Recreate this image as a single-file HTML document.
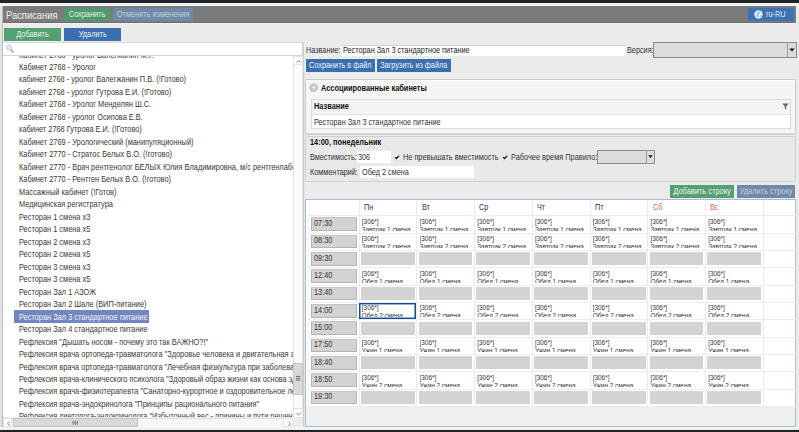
<!DOCTYPE html>
<html><head><meta charset="utf-8"><style>
html,body{margin:0;padding:0;}
body{width:799px;height:432px;overflow:hidden;position:relative;background:#ebebeb;font-family:"Liberation Sans", sans-serif;}
.a{position:absolute;}
.t{white-space:nowrap;}
</style></head><body>
<div class="a " style="left:0px;top:0px;width:799px;height:3.2px;background:#1f2428"></div>
<div class="a " style="left:0px;top:3.2px;width:799px;height:2.8px;background:#f4f4f4"></div>
<div class="a " style="left:0px;top:429.5px;width:799px;height:2.5px;background:#1f2428"></div>
<div class="a " style="left:0px;top:427.3px;width:799px;height:2.2px;background:#f4f4f4"></div>
<div class="a " style="left:0px;top:6px;width:2.3px;height:421.3px;background:#e2e2e2"></div>
<div class="a " style="left:2.3px;top:6px;width:0.8px;height:421.3px;background:#bcbcbc"></div>
<div class="a " style="left:3.1px;top:5.8px;width:793.1px;height:17.5px;background:#7b7b7b;border-bottom:0.8px solid #6f6f6f;box-sizing:border-box"></div>
<div class="a " style="left:3.1px;top:23.3px;width:793.1px;height:1.0px;background:#f1f1f1"></div>
<div class="a t" style="left:5.8px;top:9.5px;height:12px;line-height:12px;font-size:10.0px;color:#f2f2f2;font-weight:normal;transform:scaleX(0.937);transform-origin:0 0">Расписания</div>
<div class="a " style="left:64px;top:8px;width:46px;height:13px;background:#4e9a6c"></div>
<div class="a t" style="left:64px;top:8.5px;height:12px;line-height:12px;font-size:8.288px;color:#e6efe0;font-weight:normal;width:51.52px;text-align:center;transform:scaleX(0.8929);transform-origin:0 0;">Сохранить</div>
<div class="a " style="left:112.5px;top:8px;width:80.1px;height:13px;background:#7189a8"></div>
<div class="a t" style="left:112.5px;top:8.5px;height:12px;line-height:12px;font-size:8.288px;color:#c3ccd8;font-weight:normal;width:89.71px;text-align:center;transform:scaleX(0.8929);transform-origin:0 0;">Отменить изменения</div>
<div class="a " style="left:747.5px;top:8px;width:46.6px;height:13px;background:#3d72b4"></div>
<svg class="a" style="left:754.3px;top:10.2px" width="9" height="9" viewBox="0 0 9 9"><circle cx="4.5" cy="4.5" r="4.2" fill="#e2eefb"/><path d="M4.8 1.0 L6.6 2.2 L5.4 3.8 L3.8 4.6 L4.8 6.0 L3.4 7.4 L2.2 6.2 L2.8 4.2 Z" fill="#98bde9"/><path d="M6.0 5.0 L7.8 4.8 L7.2 7.0 L5.8 7.4 Z" fill="#a8c8ee"/></svg>
<div class="a t" style="left:766px;top:8.6px;height:12px;line-height:12px;font-size:8.288px;color:#e6eef8;font-weight:normal;transform:scaleX(0.8929);transform-origin:0 0;">ru-RU</div>
<div class="a " style="left:4px;top:28px;width:57px;height:13px;background:#55a070"></div>
<div class="a t" style="left:4px;top:28.6px;height:12px;line-height:12px;font-size:8.232px;color:#eef4ea;font-weight:normal;width:63.84px;text-align:center;transform:scaleX(0.8929);transform-origin:0 0;">Добавить</div>
<div class="a " style="left:63.5px;top:28px;width:57.5px;height:13px;background:#3b6fae"></div>
<div class="a t" style="left:63.5px;top:28.6px;height:12px;line-height:12px;font-size:8.232px;color:#eef2f8;font-weight:normal;width:64.4px;text-align:center;transform:scaleX(0.8929);transform-origin:0 0;">Удалить</div>
<div class="a " style="left:3.1px;top:42.3px;width:300.1px;height:12.7px;background:#ffffff;border-top:0.6px solid #dadada;border-right:0.6px solid #d0d0d0;box-sizing:border-box"></div>
<div class="a " style="left:3.1px;top:55px;width:299.9px;height:1px;background:#d6d6d6"></div>
<svg class="a" style="left:4px;top:43px" width="12" height="12" viewBox="4 43 12 12"><path d="M10.7 49.5 L13.4 52.7" stroke="#8a96a2" stroke-width="1.3"/><circle cx="8.9" cy="47.5" r="2.8" fill="#d9e8f8" stroke="#c2d0dc" stroke-width="0.7"/></svg>
<div class="a" style="left:3.1px;top:56px;width:290.2px;height:361.4px;background:#fff;overflow:hidden"><div class="a t" style="left:15.700000000000001px;top:-7.48px;height:12.4px;line-height:12.4px;font-size:8.29px;transform:scaleX(0.893);transform-origin:0 0;color:#383838">Кабинет 2768 - уролог Валегжанин М.Г.</div><div class="a t" style="left:15.700000000000001px;top:5.0px;height:12.4px;line-height:12.4px;font-size:8.29px;transform:scaleX(0.893);transform-origin:0 0;color:#383838">Кабинет 2768 - Уролог</div><div class="a t" style="left:15.700000000000001px;top:17.48px;height:12.4px;line-height:12.4px;font-size:8.29px;transform:scaleX(0.893);transform-origin:0 0;color:#383838">кабинет 2768 - уролог Валегжанин П.В. (!Готово)</div><div class="a t" style="left:15.700000000000001px;top:29.96px;height:12.4px;line-height:12.4px;font-size:8.29px;transform:scaleX(0.893);transform-origin:0 0;color:#383838">кабинет 2768 - уролог Гутрова Е.И. (!Готово)</div><div class="a t" style="left:15.700000000000001px;top:42.44px;height:12.4px;line-height:12.4px;font-size:8.29px;transform:scaleX(0.893);transform-origin:0 0;color:#383838">Кабинет 2768 - Уролог Менделян Ш.С.</div><div class="a t" style="left:15.700000000000001px;top:54.92px;height:12.4px;line-height:12.4px;font-size:8.29px;transform:scaleX(0.893);transform-origin:0 0;color:#383838">Кабинет 2768 - уролог Осипова Е.В.</div><div class="a t" style="left:15.700000000000001px;top:67.4px;height:12.4px;line-height:12.4px;font-size:8.29px;transform:scaleX(0.893);transform-origin:0 0;color:#383838">кабинет 2768 Гутрова Е.И. (!Готово)</div><div class="a t" style="left:15.700000000000001px;top:79.88px;height:12.4px;line-height:12.4px;font-size:8.29px;transform:scaleX(0.893);transform-origin:0 0;color:#383838">Кабинет 2769 - Урологический (манипуляционный)</div><div class="a t" style="left:15.700000000000001px;top:92.36px;height:12.4px;line-height:12.4px;font-size:8.29px;transform:scaleX(0.893);transform-origin:0 0;color:#383838">Кабинет 2770 - Стратос Белых В.О. (!готово)</div><div class="a t" style="left:15.700000000000001px;top:104.84px;height:12.4px;line-height:12.4px;font-size:8.29px;transform:scaleX(0.893);transform-origin:0 0;color:#383838">Кабинет 2770 - Врач рентгенолог БЕЛЫХ Юлия Владимировна, м/с рентгенлаборант</div><div class="a t" style="left:15.700000000000001px;top:117.32px;height:12.4px;line-height:12.4px;font-size:8.29px;transform:scaleX(0.893);transform-origin:0 0;color:#383838">Кабинет 2770 - Рентген Белых В.О. (!готово)</div><div class="a t" style="left:15.700000000000001px;top:129.8px;height:12.4px;line-height:12.4px;font-size:8.29px;transform:scaleX(0.893);transform-origin:0 0;color:#383838">Массажный кабинет (!Готов)</div><div class="a t" style="left:15.700000000000001px;top:142.28px;height:12.4px;line-height:12.4px;font-size:8.29px;transform:scaleX(0.893);transform-origin:0 0;color:#383838">Медицинская регистратура</div><div class="a t" style="left:15.700000000000001px;top:154.76px;height:12.4px;line-height:12.4px;font-size:8.29px;transform:scaleX(0.893);transform-origin:0 0;color:#383838">Ресторан 1 смена x3</div><div class="a t" style="left:15.700000000000001px;top:167.24px;height:12.4px;line-height:12.4px;font-size:8.29px;transform:scaleX(0.893);transform-origin:0 0;color:#383838">Ресторан 1 смена x5</div><div class="a t" style="left:15.700000000000001px;top:179.72px;height:12.4px;line-height:12.4px;font-size:8.29px;transform:scaleX(0.893);transform-origin:0 0;color:#383838">Ресторан 2 смена x3</div><div class="a t" style="left:15.700000000000001px;top:192.2px;height:12.4px;line-height:12.4px;font-size:8.29px;transform:scaleX(0.893);transform-origin:0 0;color:#383838">Ресторан 2 смена x5</div><div class="a t" style="left:15.700000000000001px;top:204.68px;height:12.4px;line-height:12.4px;font-size:8.29px;transform:scaleX(0.893);transform-origin:0 0;color:#383838">Ресторан 3 смена x3</div><div class="a t" style="left:15.700000000000001px;top:217.16px;height:12.4px;line-height:12.4px;font-size:8.29px;transform:scaleX(0.893);transform-origin:0 0;color:#383838">Ресторан 3 смена x5</div><div class="a t" style="left:15.700000000000001px;top:229.64px;height:12.4px;line-height:12.4px;font-size:8.29px;transform:scaleX(0.893);transform-origin:0 0;color:#383838">Ресторан Зал 1 АЗОЖ</div><div class="a t" style="left:15.700000000000001px;top:242.12px;height:12.4px;line-height:12.4px;font-size:8.29px;transform:scaleX(0.893);transform-origin:0 0;color:#383838">Ресторан Зал 2 Шале (ВИП-питание)</div><div class="a" style="left:11.1px;top:254.3px;width:134.4px;height:12.3px;background:#7187c0"></div><div class="a t" style="left:15.700000000000001px;top:254.6px;height:12.4px;line-height:12.4px;font-size:8.29px;transform:scaleX(0.893);transform-origin:0 0;color:#f4f6fb">Ресторан Зал 3 стандартное питание</div><div class="a t" style="left:15.700000000000001px;top:267.08px;height:12.4px;line-height:12.4px;font-size:8.29px;transform:scaleX(0.893);transform-origin:0 0;color:#383838">Ресторан Зал 4 стандартное питание</div><div class="a t" style="left:15.700000000000001px;top:279.56px;height:12.4px;line-height:12.4px;font-size:8.29px;transform:scaleX(0.893);transform-origin:0 0;color:#383838">Рефлексия &quot;Дышать носом - почему это так ВАЖНО?!&quot;</div><div class="a t" style="left:15.700000000000001px;top:292.04px;height:12.4px;line-height:12.4px;font-size:8.29px;transform:scaleX(0.893);transform-origin:0 0;color:#383838">Рефлексия врача ортопеда-травматолога &quot;Здоровье человека и двигательная активность&quot;</div><div class="a t" style="left:15.700000000000001px;top:304.52px;height:12.4px;line-height:12.4px;font-size:8.29px;transform:scaleX(0.893);transform-origin:0 0;color:#383838">Рефлексия врача ортопеда-травматолога &quot;Лечебная физкультура при заболеваниях&quot;</div><div class="a t" style="left:15.700000000000001px;top:317.0px;height:12.4px;line-height:12.4px;font-size:8.29px;transform:scaleX(0.893);transform-origin:0 0;color:#383838">Рефлексия врача-клинического психолога &quot;Здоровый образ жизни как основа здоровья&quot;</div><div class="a t" style="left:15.700000000000001px;top:329.48px;height:12.4px;line-height:12.4px;font-size:8.29px;transform:scaleX(0.893);transform-origin:0 0;color:#383838">Рефлексия врача-физиотерапевта &quot;Санаторно-курортное и оздоровительное лечение&quot;</div><div class="a t" style="left:15.700000000000001px;top:341.96px;height:12.4px;line-height:12.4px;font-size:8.29px;transform:scaleX(0.893);transform-origin:0 0;color:#383838">Рефлексия врача-эндокринолога &quot;Принципы рационального питания&quot;</div><div class="a t" style="left:15.700000000000001px;top:354.44px;height:12.4px;line-height:12.4px;font-size:8.29px;transform:scaleX(0.893);transform-origin:0 0;color:#383838">Рефлексия диетолога-эндокринолога &quot;Избыточный вес - причины и пути решения&quot;</div></div>
<div class="a " style="left:293.3px;top:56px;width:9.3px;height:361.6px;background:#fcfcfc;border-left:0.6px solid #e2e2e2;border-right:0.6px solid #e4e4e4;box-sizing:border-box"></div>
<div class="a " style="left:293.3px;top:56px;width:9.3px;height:9.2px;background:#fff;border:0.6px solid #e4e4e4;box-sizing:border-box"><svg width="9.3" height="9.2" viewBox="0 0 9.3 9.2" style="position:absolute;left:0;top:0"><path d="M2.5 5.5 L4.65 3.5 L6.8 5.5" stroke="#444" stroke-width="0.7" fill="none"/></svg></div>
<div class="a " style="left:293.3px;top:363.1px;width:9.3px;height:31.5px;background:#d9d9d9;border:0.6px solid #c4c4c4;box-sizing:border-box"></div>
<svg class="a" style="left:294px;top:374px" width="8" height="8" viewBox="294 374 8 8"><path d="M295.9 376.4 H300.3 M295.9 378.3 H300.3 M295.9 380.2 H300.3" stroke="#6a6a6a" stroke-width="1"/></svg>
<div class="a " style="left:293.3px;top:407.6px;width:9.3px;height:10.0px;background:#fff;border:0.6px solid #e4e4e4;box-sizing:border-box"><svg width="9.3" height="10" viewBox="0 0 9.3 10" style="position:absolute;left:0;top:0"><path d="M2.5 4.0 L4.65 6.0 L6.8 4.0" stroke="#444" stroke-width="0.7" fill="none"/></svg></div>
<div class="a " style="left:3.1px;top:417.6px;width:290.2px;height:9.4px;background:#f7f7f7;border-top:0.6px solid #e2e2e2;box-sizing:border-box"></div>
<div class="a " style="left:3.1px;top:417.6px;width:9.4px;height:9.4px;background:#fff;border:0.6px solid #e4e4e4;box-sizing:border-box"><svg width="9.4" height="9.4" viewBox="0 0 9.4 9.4" style="position:absolute;left:0;top:0"><path d="M5.7 2.6 L3.7 4.7 L5.7 6.8" stroke="#444" stroke-width="0.7" fill="none"/></svg></div>
<div class="a " style="left:12.5px;top:417.6px;width:125.1px;height:9.4px;background:#d9d9d9;border:0.6px solid #c4c4c4;box-sizing:border-box"></div>
<svg class="a" style="left:71px;top:419px" width="8" height="8" viewBox="71 419 8 8"><path d="M73.2 420.8 V424.7 M75.2 420.8 V424.7 M77.2 420.8 V424.7" stroke="#6a6a6a" stroke-width="1"/></svg>
<div class="a " style="left:283.2px;top:417.6px;width:10.1px;height:9.4px;background:#fff;border:0.6px solid #e4e4e4;box-sizing:border-box"><svg width="10" height="9.4" viewBox="0 0 10 9.4" style="position:absolute;left:0;top:0"><path d="M4.3 2.6 L6.3 4.7 L4.3 6.8" stroke="#444" stroke-width="0.7" fill="none"/></svg></div>
<div class="a " style="left:293.3px;top:417.6px;width:9.3px;height:9.4px;background:#ececec"></div>
<div class="a " style="left:302.6px;top:42.6px;width:1.3px;height:384.7px;background:#cfcfcf"></div>
<div class="a " style="left:303.9px;top:56px;width:1.4px;height:371.3px;background:#e4e4e4"></div>
<div class="a t" style="left:305.6px;top:44.6px;height:12px;line-height:12px;font-size:8.176px;color:#333;font-weight:normal;transform:scaleX(0.8929);transform-origin:0 0;">Название:</div>
<div class="a " style="left:341.3px;top:44.5px;width:284.1px;height:11.6px;background:#fff;border-top:0.6px solid #d0d0d0;box-sizing:border-box"></div>
<div class="a t" style="left:343px;top:44.6px;height:12px;line-height:12px;font-size:8.176px;color:#222;font-weight:normal;transform:scaleX(0.8929);transform-origin:0 0;">Ресторан Зал 3 стандартное питание</div>
<div class="a t" style="left:627.3px;top:44.6px;height:12px;line-height:12px;font-size:8.176px;color:#333;font-weight:normal;transform:scaleX(0.8929);transform-origin:0 0;">Версия:</div>
<div class="a " style="left:652.8px;top:42.4px;width:144.1px;height:15.5px;background:#dcdcdc;border:1px solid #8a8a8a;box-sizing:border-box"></div>
<div class="a " style="left:787.3px;top:42.4px;width:0.8px;height:15.5px;background:#9a9a9a"></div>
<svg class="a" style="left:789px;top:48px" width="6" height="4" viewBox="0 0 6 4"><path d="M0.4 0.4 L5.6 0.4 L3 3.4 Z" fill="#111"/></svg>
<div class="a " style="left:306.3px;top:59px;width:68.7px;height:13px;background:#3b6fae"></div>
<div class="a t" style="left:306.3px;top:59.6px;height:12px;line-height:12px;font-size:8.176px;color:#eef2f8;font-weight:normal;width:76.94px;text-align:center;transform:scaleX(0.8929);transform-origin:0 0;">Сохранить в файл</div>
<div class="a " style="left:377.2px;top:59px;width:73.4px;height:13px;background:#3b6fae"></div>
<div class="a t" style="left:377.2px;top:59.6px;height:12px;line-height:12px;font-size:8.176px;color:#eef2f8;font-weight:normal;width:82.21px;text-align:center;transform:scaleX(0.8929);transform-origin:0 0;">Загрузить из файла</div>
<div class="a " style="left:305.3px;top:79.0px;width:491.0px;height:56.3px;background:#f5f5f5;border:1px solid #cbcbcb;border-bottom:2px solid #d2d2d2;box-sizing:border-box;box-shadow:inset 0 1px 0 #fbfbfb;border-radius:1.5px"></div>
<svg class="a" style="left:308.5px;top:82.8px" width="9.5" height="9.5" viewBox="0 0 9.5 9.5"><circle cx="4.75" cy="4.75" r="4.5" fill="#c8c8c8"/><path d="M2.5 3.7 L7.0 3.7 L4.75 6.1 Z" fill="#fafafa"/></svg>
<div class="a t" style="left:320.8px;top:82.5px;height:12px;line-height:12px;font-size:8.288px;color:#111;font-weight:bold;transform:scaleX(0.8929);transform-origin:0 0;">Ассоциированные кабинеты</div>
<div class="a " style="left:311px;top:98.8px;width:479.8px;height:30.1px;background:#fff;border:1px solid #d8d8e6;box-sizing:border-box"></div>
<div class="a " style="left:312px;top:99.8px;width:477.8px;height:15.5px;background:#f4f4f4;border-bottom:1px solid #e0e0ea;box-sizing:border-box"></div>
<div class="a t" style="left:313.9px;top:101.2px;height:12px;line-height:12px;font-size:8.288px;color:#111;font-weight:bold;transform:scaleX(0.8929);transform-origin:0 0;">Название</div>
<svg class="a" style="left:782px;top:103px" width="7" height="7" viewBox="0 0 7 7"><path d="M0.3 0.5 L6.7 0.5 L4.2 3.4 L4.2 6.8 L2.8 5.6 L2.8 3.4 Z" fill="#666"/></svg>
<div class="a t" style="left:313.9px;top:116.8px;height:12px;line-height:12px;font-size:8.176px;color:#333;font-weight:normal;transform:scaleX(0.8929);transform-origin:0 0;">Ресторан Зал 3 стандартное питание</div>
<div class="a " style="left:305.3px;top:135.5px;width:490.7px;height:46.7px;background:#e9e9e9;border:1px solid #d0d0d0;box-sizing:border-box;border-radius:1.5px"></div>
<div class="a t" style="left:309.8px;top:137.1px;height:12px;line-height:12px;font-size:8.288px;color:#111;font-weight:bold;transform:scaleX(0.8929);transform-origin:0 0;">14:00, понедельник</div>
<div class="a t" style="left:309.5px;top:152.1px;height:12px;line-height:12px;font-size:8.176px;color:#333;font-weight:normal;transform:scaleX(0.8929);transform-origin:0 0;">Вместимость:</div>
<div class="a " style="left:356.8px;top:150.8px;width:34.0px;height:12.0px;background:#fff"></div>
<div class="a t" style="left:358.2px;top:151.9px;height:12px;line-height:12px;font-size:8.176px;color:#333;font-weight:normal;transform:scaleX(0.8929);transform-origin:0 0;">306</div>
<svg class="a" style="left:392px;top:152px" width="10" height="10" viewBox="392 152 10 10"><rect x="393.9" y="154.1" width="6.2" height="6.2" rx="0.8" fill="#f8f8f8" stroke="#cdcdcd" stroke-width="0.6"/><path d="M395.0 157.2 L396.5 158.5 L399.0 155.7" stroke="#111" stroke-width="1.3" fill="none"/></svg>
<div class="a t" style="left:403.3px;top:152.0px;height:12px;line-height:12px;font-size:8.21px;color:#333;font-weight:normal;transform:scaleX(0.8929);transform-origin:0 0;">Не превышать вместимость</div>
<svg class="a" style="left:500px;top:152px" width="10" height="10" viewBox="500 152 10 10"><rect x="502.0" y="154.1" width="6.2" height="6.2" rx="0.8" fill="#f8f8f8" stroke="#cdcdcd" stroke-width="0.6"/><path d="M503.1 157.2 L504.6 158.5 L507.1 155.7" stroke="#111" stroke-width="1.3" fill="none"/></svg>
<div class="a t" style="left:511.3px;top:152.0px;height:12px;line-height:12px;font-size:8.288px;color:#333;font-weight:normal;transform:scaleX(0.8929);transform-origin:0 0;">Рабочее время Правило:</div>
<div class="a " style="left:597.3px;top:150.1px;width:58.1px;height:13.5px;background:#dcdcdc;border:1px solid #8a8a8a;box-sizing:border-box"></div>
<div class="a " style="left:645.6px;top:150.1px;width:0.8px;height:13.5px;background:#9a9a9a"></div>
<svg class="a" style="left:648.4px;top:155.3px" width="5" height="3.5" viewBox="0 0 5 3.5"><path d="M0.3 0.3 L4.7 0.3 L2.5 3.1 Z" fill="#111"/></svg>
<div class="a t" style="left:309.5px;top:166.5px;height:12px;line-height:12px;font-size:8.176px;color:#333;font-weight:normal;transform:scaleX(0.8929);transform-origin:0 0;">Комментарий:</div>
<div class="a " style="left:359.8px;top:166px;width:114.2px;height:12px;background:#fff"></div>
<div class="a t" style="left:361.6px;top:166.5px;height:12px;line-height:12px;font-size:8.176px;color:#333;font-weight:normal;transform:scaleX(0.8929);transform-origin:0 0;">Обед 2 смена</div>
<div class="a " style="left:669.9px;top:184.9px;width:64.1px;height:12.9px;background:#55a070"></div>
<div class="a t" style="left:669.9px;top:185.4px;height:12px;line-height:12px;font-size:8.344px;color:#eef4ea;font-weight:normal;width:71.79px;text-align:center;transform:scaleX(0.8929);transform-origin:0 0;">Добавить строку</div>
<div class="a " style="left:736.9px;top:184.9px;width:58.2px;height:12.9px;background:#7189a8"></div>
<div class="a t" style="left:736.9px;top:185.4px;height:12px;line-height:12px;font-size:8.344px;color:#c6cfdb;font-weight:normal;width:65.18px;text-align:center;transform:scaleX(0.8929);transform-origin:0 0;">Удалить строку</div>
<div class="a " style="left:305.4px;top:199px;width:491.1px;height:228.4px;background:#efefef;border:1px solid #a9bcd6;box-sizing:border-box"></div>
<div class="a " style="left:306.4px;top:200px;width:489.1px;height:206.34px;background:#fff"></div>
<div class="a " style="left:358.6px;top:200px;width:0.6px;height:206.34px;background:#ebebeb"></div>
<div class="a " style="left:416.33px;top:200px;width:0.6px;height:206.34px;background:#ebebeb"></div>
<div class="a " style="left:474.06px;top:200px;width:0.6px;height:206.34px;background:#ebebeb"></div>
<div class="a " style="left:531.79px;top:200px;width:0.6px;height:206.34px;background:#ebebeb"></div>
<div class="a " style="left:589.52px;top:200px;width:0.6px;height:206.34px;background:#ebebeb"></div>
<div class="a " style="left:647.25px;top:200px;width:0.6px;height:206.34px;background:#ebebeb"></div>
<div class="a " style="left:704.98px;top:200px;width:0.6px;height:206.34px;background:#ebebeb"></div>
<div class="a " style="left:762.71px;top:200px;width:0.6px;height:206.34px;background:#ebebeb"></div>
<div class="a " style="left:307.8px;top:215.6px;width:0.6px;height:190.74px;background:#f3f3f3"></div>
<div class="a " style="left:308px;top:215.3px;width:487.5px;height:0.6px;background:#ededed"></div>
<div class="a " style="left:308px;top:232.64px;width:487.5px;height:0.6px;background:#ededed"></div>
<div class="a " style="left:308px;top:249.98px;width:487.5px;height:0.6px;background:#ededed"></div>
<div class="a " style="left:308px;top:267.32px;width:487.5px;height:0.6px;background:#ededed"></div>
<div class="a " style="left:308px;top:284.66px;width:487.5px;height:0.6px;background:#ededed"></div>
<div class="a " style="left:308px;top:302.0px;width:487.5px;height:0.6px;background:#ededed"></div>
<div class="a " style="left:308px;top:319.34px;width:487.5px;height:0.6px;background:#ededed"></div>
<div class="a " style="left:308px;top:336.68px;width:487.5px;height:0.6px;background:#ededed"></div>
<div class="a " style="left:308px;top:354.02px;width:487.5px;height:0.6px;background:#ededed"></div>
<div class="a " style="left:308px;top:371.36px;width:487.5px;height:0.6px;background:#ededed"></div>
<div class="a " style="left:308px;top:388.7px;width:487.5px;height:0.6px;background:#ededed"></div>
<div class="a " style="left:308px;top:406.04px;width:487.5px;height:0.6px;background:#ededed"></div>
<div class="a t" style="left:363.9px;top:202.0px;height:12px;line-height:12px;font-size:8.176px;color:#333;font-weight:normal;transform:scaleX(0.8929);transform-origin:0 0;">Пн</div>
<div class="a t" style="left:421.63px;top:202.0px;height:12px;line-height:12px;font-size:8.176px;color:#333;font-weight:normal;transform:scaleX(0.8929);transform-origin:0 0;">Вт</div>
<div class="a t" style="left:479.36px;top:202.0px;height:12px;line-height:12px;font-size:8.176px;color:#333;font-weight:normal;transform:scaleX(0.8929);transform-origin:0 0;">Ср</div>
<div class="a t" style="left:537.09px;top:202.0px;height:12px;line-height:12px;font-size:8.176px;color:#333;font-weight:normal;transform:scaleX(0.8929);transform-origin:0 0;">Чт</div>
<div class="a t" style="left:594.82px;top:202.0px;height:12px;line-height:12px;font-size:8.176px;color:#333;font-weight:normal;transform:scaleX(0.8929);transform-origin:0 0;">Пт</div>
<div class="a t" style="left:652.55px;top:202.0px;height:12px;line-height:12px;font-size:8.176px;color:#e8604c;font-weight:normal;transform:scaleX(0.8929);transform-origin:0 0;">Сб</div>
<div class="a t" style="left:710.28px;top:202.0px;height:12px;line-height:12px;font-size:8.176px;color:#e8604c;font-weight:normal;transform:scaleX(0.8929);transform-origin:0 0;">Вс</div>
<div class="a " style="left:310.9px;top:217.4px;width:46.2px;height:13.5px;background:#d3d3d3;border:0.6px solid #b4b4b4;border-top-color:#c2c2c2;box-sizing:border-box"></div>
<div class="a t" style="left:314.0px;top:218.0px;height:12px;line-height:12px;font-size:8.232px;color:#333;font-weight:normal;transform:scaleX(0.8929);transform-origin:0 0;">07:30</div>
<div class="a" style="left:361.8px;top:216px;width:54px;height:15px;overflow:hidden"><div style="position:absolute;left:0;top:2px;line-height:7.5px;font-size:6.4px;color:#333;white-space:nowrap">[306*]<br>Завтрак 1 смена</div></div>
<div class="a" style="left:419.53px;top:216px;width:54px;height:15px;overflow:hidden"><div style="position:absolute;left:0;top:2px;line-height:7.5px;font-size:6.4px;color:#333;white-space:nowrap">[306*]<br>Завтрак 1 смена</div></div>
<div class="a" style="left:477.26px;top:216px;width:54px;height:15px;overflow:hidden"><div style="position:absolute;left:0;top:2px;line-height:7.5px;font-size:6.4px;color:#333;white-space:nowrap">[306*]<br>Завтрак 1 смена</div></div>
<div class="a" style="left:534.99px;top:216px;width:54px;height:15px;overflow:hidden"><div style="position:absolute;left:0;top:2px;line-height:7.5px;font-size:6.4px;color:#333;white-space:nowrap">[306*]<br>Завтрак 1 смена</div></div>
<div class="a" style="left:592.72px;top:216px;width:54px;height:15px;overflow:hidden"><div style="position:absolute;left:0;top:2px;line-height:7.5px;font-size:6.4px;color:#333;white-space:nowrap">[306*]<br>Завтрак 1 смена</div></div>
<div class="a" style="left:650.45px;top:216px;width:54px;height:15px;overflow:hidden"><div style="position:absolute;left:0;top:2px;line-height:7.5px;font-size:6.4px;color:#333;white-space:nowrap">[306*]<br>Завтрак 1 смена</div></div>
<div class="a" style="left:708.18px;top:216px;width:54px;height:15px;overflow:hidden"><div style="position:absolute;left:0;top:2px;line-height:7.5px;font-size:6.4px;color:#333;white-space:nowrap">[306*]<br>Завтрак 1 смена</div></div>
<div class="a " style="left:310.9px;top:234.74px;width:46.2px;height:13.5px;background:#d3d3d3;border:0.6px solid #b4b4b4;border-top-color:#c2c2c2;box-sizing:border-box"></div>
<div class="a t" style="left:314.0px;top:235.34px;height:12px;line-height:12px;font-size:8.232px;color:#333;font-weight:normal;transform:scaleX(0.8929);transform-origin:0 0;">08:30</div>
<div class="a" style="left:361.8px;top:233px;width:54px;height:15px;overflow:hidden"><div style="position:absolute;left:0;top:2px;line-height:7.5px;font-size:6.4px;color:#333;white-space:nowrap">[306*]<br>Завтрак 2 смена</div></div>
<div class="a" style="left:419.53px;top:233px;width:54px;height:15px;overflow:hidden"><div style="position:absolute;left:0;top:2px;line-height:7.5px;font-size:6.4px;color:#333;white-space:nowrap">[306*]<br>Завтрак 2 смена</div></div>
<div class="a" style="left:477.26px;top:233px;width:54px;height:15px;overflow:hidden"><div style="position:absolute;left:0;top:2px;line-height:7.5px;font-size:6.4px;color:#333;white-space:nowrap">[306*]<br>Завтрак 2 смена</div></div>
<div class="a" style="left:534.99px;top:233px;width:54px;height:15px;overflow:hidden"><div style="position:absolute;left:0;top:2px;line-height:7.5px;font-size:6.4px;color:#333;white-space:nowrap">[306*]<br>Завтрак 2 смена</div></div>
<div class="a" style="left:592.72px;top:233px;width:54px;height:15px;overflow:hidden"><div style="position:absolute;left:0;top:2px;line-height:7.5px;font-size:6.4px;color:#333;white-space:nowrap">[306*]<br>Завтрак 2 смена</div></div>
<div class="a" style="left:650.45px;top:233px;width:54px;height:15px;overflow:hidden"><div style="position:absolute;left:0;top:2px;line-height:7.5px;font-size:6.4px;color:#333;white-space:nowrap">[306*]<br>Завтрак 2 смена</div></div>
<div class="a" style="left:708.18px;top:233px;width:54px;height:15px;overflow:hidden"><div style="position:absolute;left:0;top:2px;line-height:7.5px;font-size:6.4px;color:#333;white-space:nowrap">[306*]<br>Завтрак 2 смена</div></div>
<div class="a " style="left:310.9px;top:252.08px;width:46.2px;height:13.5px;background:#d3d3d3;border:0.6px solid #b4b4b4;border-top-color:#c2c2c2;box-sizing:border-box"></div>
<div class="a t" style="left:314.0px;top:252.68px;height:12px;line-height:12px;font-size:8.232px;color:#333;font-weight:normal;transform:scaleX(0.8929);transform-origin:0 0;">09:30</div>
<div class="a " style="left:360.9px;top:252.18px;width:53.7px;height:13.1px;background:#d4d4d4"></div>
<div class="a " style="left:418.63px;top:252.18px;width:53.7px;height:13.1px;background:#d4d4d4"></div>
<div class="a " style="left:476.36px;top:252.18px;width:53.7px;height:13.1px;background:#d4d4d4"></div>
<div class="a " style="left:534.09px;top:252.18px;width:53.7px;height:13.1px;background:#d4d4d4"></div>
<div class="a " style="left:591.82px;top:252.18px;width:53.7px;height:13.1px;background:#d4d4d4"></div>
<div class="a " style="left:649.55px;top:252.18px;width:53.7px;height:13.1px;background:#d4d4d4"></div>
<div class="a " style="left:707.28px;top:252.18px;width:53.7px;height:13.1px;background:#d4d4d4"></div>
<div class="a " style="left:310.9px;top:269.42px;width:46.2px;height:13.5px;background:#d3d3d3;border:0.6px solid #b4b4b4;border-top-color:#c2c2c2;box-sizing:border-box"></div>
<div class="a t" style="left:314.0px;top:270.02px;height:12px;line-height:12px;font-size:8.232px;color:#333;font-weight:normal;transform:scaleX(0.8929);transform-origin:0 0;">12:40</div>
<div class="a" style="left:361.8px;top:268px;width:54px;height:15px;overflow:hidden"><div style="position:absolute;left:0;top:2px;line-height:7.5px;font-size:6.4px;color:#333;white-space:nowrap">[306*]<br>Обед 1 смена</div></div>
<div class="a" style="left:419.53px;top:268px;width:54px;height:15px;overflow:hidden"><div style="position:absolute;left:0;top:2px;line-height:7.5px;font-size:6.4px;color:#333;white-space:nowrap">[306*]<br>Обед 1 смена</div></div>
<div class="a" style="left:477.26px;top:268px;width:54px;height:15px;overflow:hidden"><div style="position:absolute;left:0;top:2px;line-height:7.5px;font-size:6.4px;color:#333;white-space:nowrap">[306*]<br>Обед 1 смена</div></div>
<div class="a" style="left:534.99px;top:268px;width:54px;height:15px;overflow:hidden"><div style="position:absolute;left:0;top:2px;line-height:7.5px;font-size:6.4px;color:#333;white-space:nowrap">[306*]<br>Обед 1 смена</div></div>
<div class="a" style="left:592.72px;top:268px;width:54px;height:15px;overflow:hidden"><div style="position:absolute;left:0;top:2px;line-height:7.5px;font-size:6.4px;color:#333;white-space:nowrap">[306*]<br>Обед 1 смена</div></div>
<div class="a" style="left:650.45px;top:268px;width:54px;height:15px;overflow:hidden"><div style="position:absolute;left:0;top:2px;line-height:7.5px;font-size:6.4px;color:#333;white-space:nowrap">[306*]<br>Обед 1 смена</div></div>
<div class="a" style="left:708.18px;top:268px;width:54px;height:15px;overflow:hidden"><div style="position:absolute;left:0;top:2px;line-height:7.5px;font-size:6.4px;color:#333;white-space:nowrap">[306*]<br>Обед 1 смена</div></div>
<div class="a " style="left:310.9px;top:286.76px;width:46.2px;height:13.5px;background:#d3d3d3;border:0.6px solid #b4b4b4;border-top-color:#c2c2c2;box-sizing:border-box"></div>
<div class="a t" style="left:314.0px;top:287.36px;height:12px;line-height:12px;font-size:8.232px;color:#333;font-weight:normal;transform:scaleX(0.8929);transform-origin:0 0;">13:40</div>
<div class="a " style="left:360.9px;top:286.86px;width:53.7px;height:13.1px;background:#d4d4d4"></div>
<div class="a " style="left:418.63px;top:286.86px;width:53.7px;height:13.1px;background:#d4d4d4"></div>
<div class="a " style="left:476.36px;top:286.86px;width:53.7px;height:13.1px;background:#d4d4d4"></div>
<div class="a " style="left:534.09px;top:286.86px;width:53.7px;height:13.1px;background:#d4d4d4"></div>
<div class="a " style="left:591.82px;top:286.86px;width:53.7px;height:13.1px;background:#d4d4d4"></div>
<div class="a " style="left:649.55px;top:286.86px;width:53.7px;height:13.1px;background:#d4d4d4"></div>
<div class="a " style="left:707.28px;top:286.86px;width:53.7px;height:13.1px;background:#d4d4d4"></div>
<div class="a " style="left:310.9px;top:304.1px;width:46.2px;height:13.5px;background:#d3d3d3;border:0.6px solid #b4b4b4;border-top-color:#c2c2c2;box-sizing:border-box"></div>
<div class="a t" style="left:314.0px;top:304.7px;height:12px;line-height:12px;font-size:8.232px;color:#333;font-weight:normal;transform:scaleX(0.8929);transform-origin:0 0;">14:00</div>
<div class="a" style="left:361.8px;top:302px;width:54px;height:15px;overflow:hidden"><div style="position:absolute;left:0;top:2px;line-height:7.5px;font-size:6.4px;color:#333;white-space:nowrap">[306*]<br>Обед 2 смена</div></div>
<div class="a " style="left:359.2px;top:302.6px;width:57.13px;height:16.74px;box-shadow:inset 0 0 0 0.7px #173f7c, inset 0 0 0 1.6px #2368c4"></div>
<div class="a" style="left:419.53px;top:302px;width:54px;height:15px;overflow:hidden"><div style="position:absolute;left:0;top:2px;line-height:7.5px;font-size:6.4px;color:#333;white-space:nowrap">[306*]<br>Обед 2 смена</div></div>
<div class="a" style="left:477.26px;top:302px;width:54px;height:15px;overflow:hidden"><div style="position:absolute;left:0;top:2px;line-height:7.5px;font-size:6.4px;color:#333;white-space:nowrap">[306*]<br>Обед 2 смена</div></div>
<div class="a" style="left:534.99px;top:302px;width:54px;height:15px;overflow:hidden"><div style="position:absolute;left:0;top:2px;line-height:7.5px;font-size:6.4px;color:#333;white-space:nowrap">[306*]<br>Обед 2 смена</div></div>
<div class="a" style="left:592.72px;top:302px;width:54px;height:15px;overflow:hidden"><div style="position:absolute;left:0;top:2px;line-height:7.5px;font-size:6.4px;color:#333;white-space:nowrap">[306*]<br>Обед 2 смена</div></div>
<div class="a" style="left:650.45px;top:302px;width:54px;height:15px;overflow:hidden"><div style="position:absolute;left:0;top:2px;line-height:7.5px;font-size:6.4px;color:#333;white-space:nowrap">[306*]<br>Обед 2 смена</div></div>
<div class="a" style="left:708.18px;top:302px;width:54px;height:15px;overflow:hidden"><div style="position:absolute;left:0;top:2px;line-height:7.5px;font-size:6.4px;color:#333;white-space:nowrap">[306*]<br>Обед 2 смена</div></div>
<div class="a " style="left:310.9px;top:321.44px;width:46.2px;height:13.5px;background:#d3d3d3;border:0.6px solid #b4b4b4;border-top-color:#c2c2c2;box-sizing:border-box"></div>
<div class="a t" style="left:314.0px;top:322.04px;height:12px;line-height:12px;font-size:8.232px;color:#333;font-weight:normal;transform:scaleX(0.8929);transform-origin:0 0;">15:00</div>
<div class="a " style="left:360.9px;top:321.54px;width:53.7px;height:13.1px;background:#d4d4d4"></div>
<div class="a " style="left:418.63px;top:321.54px;width:53.7px;height:13.1px;background:#d4d4d4"></div>
<div class="a " style="left:476.36px;top:321.54px;width:53.7px;height:13.1px;background:#d4d4d4"></div>
<div class="a " style="left:534.09px;top:321.54px;width:53.7px;height:13.1px;background:#d4d4d4"></div>
<div class="a " style="left:591.82px;top:321.54px;width:53.7px;height:13.1px;background:#d4d4d4"></div>
<div class="a " style="left:649.55px;top:321.54px;width:53.7px;height:13.1px;background:#d4d4d4"></div>
<div class="a " style="left:707.28px;top:321.54px;width:53.7px;height:13.1px;background:#d4d4d4"></div>
<div class="a " style="left:310.9px;top:338.78px;width:46.2px;height:13.5px;background:#d3d3d3;border:0.6px solid #b4b4b4;border-top-color:#c2c2c2;box-sizing:border-box"></div>
<div class="a t" style="left:314.0px;top:339.38px;height:12px;line-height:12px;font-size:8.232px;color:#333;font-weight:normal;transform:scaleX(0.8929);transform-origin:0 0;">17:50</div>
<div class="a" style="left:361.8px;top:337px;width:54px;height:15px;overflow:hidden"><div style="position:absolute;left:0;top:2px;line-height:7.5px;font-size:6.4px;color:#333;white-space:nowrap">[306*]<br>Ужин 1 смена</div></div>
<div class="a" style="left:419.53px;top:337px;width:54px;height:15px;overflow:hidden"><div style="position:absolute;left:0;top:2px;line-height:7.5px;font-size:6.4px;color:#333;white-space:nowrap">[306*]<br>Ужин 1 смена</div></div>
<div class="a" style="left:477.26px;top:337px;width:54px;height:15px;overflow:hidden"><div style="position:absolute;left:0;top:2px;line-height:7.5px;font-size:6.4px;color:#333;white-space:nowrap">[306*]<br>Ужин 1 смена</div></div>
<div class="a" style="left:534.99px;top:337px;width:54px;height:15px;overflow:hidden"><div style="position:absolute;left:0;top:2px;line-height:7.5px;font-size:6.4px;color:#333;white-space:nowrap">[306*]<br>Ужин 1 смена</div></div>
<div class="a" style="left:592.72px;top:337px;width:54px;height:15px;overflow:hidden"><div style="position:absolute;left:0;top:2px;line-height:7.5px;font-size:6.4px;color:#333;white-space:nowrap">[306*]<br>Ужин 1 смена</div></div>
<div class="a" style="left:650.45px;top:337px;width:54px;height:15px;overflow:hidden"><div style="position:absolute;left:0;top:2px;line-height:7.5px;font-size:6.4px;color:#333;white-space:nowrap">[306*]<br>Ужин 1 смена</div></div>
<div class="a" style="left:708.18px;top:337px;width:54px;height:15px;overflow:hidden"><div style="position:absolute;left:0;top:2px;line-height:7.5px;font-size:6.4px;color:#333;white-space:nowrap">[306*]<br>Ужин 1 смена</div></div>
<div class="a " style="left:310.9px;top:356.12px;width:46.2px;height:13.5px;background:#d3d3d3;border:0.6px solid #b4b4b4;border-top-color:#c2c2c2;box-sizing:border-box"></div>
<div class="a t" style="left:314.0px;top:356.72px;height:12px;line-height:12px;font-size:8.232px;color:#333;font-weight:normal;transform:scaleX(0.8929);transform-origin:0 0;">18:40</div>
<div class="a " style="left:360.9px;top:356.22px;width:53.7px;height:13.1px;background:#d4d4d4"></div>
<div class="a " style="left:418.63px;top:356.22px;width:53.7px;height:13.1px;background:#d4d4d4"></div>
<div class="a " style="left:476.36px;top:356.22px;width:53.7px;height:13.1px;background:#d4d4d4"></div>
<div class="a " style="left:534.09px;top:356.22px;width:53.7px;height:13.1px;background:#d4d4d4"></div>
<div class="a " style="left:591.82px;top:356.22px;width:53.7px;height:13.1px;background:#d4d4d4"></div>
<div class="a " style="left:649.55px;top:356.22px;width:53.7px;height:13.1px;background:#d4d4d4"></div>
<div class="a " style="left:707.28px;top:356.22px;width:53.7px;height:13.1px;background:#d4d4d4"></div>
<div class="a " style="left:310.9px;top:373.46px;width:46.2px;height:13.5px;background:#d3d3d3;border:0.6px solid #b4b4b4;border-top-color:#c2c2c2;box-sizing:border-box"></div>
<div class="a t" style="left:314.0px;top:374.06px;height:12px;line-height:12px;font-size:8.232px;color:#333;font-weight:normal;transform:scaleX(0.8929);transform-origin:0 0;">18:50</div>
<div class="a" style="left:361.8px;top:372px;width:54px;height:15px;overflow:hidden"><div style="position:absolute;left:0;top:2px;line-height:7.5px;font-size:6.4px;color:#333;white-space:nowrap">[306*]<br>Ужин 2 смена</div></div>
<div class="a" style="left:419.53px;top:372px;width:54px;height:15px;overflow:hidden"><div style="position:absolute;left:0;top:2px;line-height:7.5px;font-size:6.4px;color:#333;white-space:nowrap">[306*]<br>Ужин 2 смена</div></div>
<div class="a" style="left:477.26px;top:372px;width:54px;height:15px;overflow:hidden"><div style="position:absolute;left:0;top:2px;line-height:7.5px;font-size:6.4px;color:#333;white-space:nowrap">[306*]<br>Ужин 2 смена</div></div>
<div class="a" style="left:534.99px;top:372px;width:54px;height:15px;overflow:hidden"><div style="position:absolute;left:0;top:2px;line-height:7.5px;font-size:6.4px;color:#333;white-space:nowrap">[306*]<br>Ужин 2 смена</div></div>
<div class="a" style="left:592.72px;top:372px;width:54px;height:15px;overflow:hidden"><div style="position:absolute;left:0;top:2px;line-height:7.5px;font-size:6.4px;color:#333;white-space:nowrap">[306*]<br>Ужин 2 смена</div></div>
<div class="a" style="left:650.45px;top:372px;width:54px;height:15px;overflow:hidden"><div style="position:absolute;left:0;top:2px;line-height:7.5px;font-size:6.4px;color:#333;white-space:nowrap">[306*]<br>Ужин 2 смена</div></div>
<div class="a" style="left:708.18px;top:372px;width:54px;height:15px;overflow:hidden"><div style="position:absolute;left:0;top:2px;line-height:7.5px;font-size:6.4px;color:#333;white-space:nowrap">[306*]<br>Ужин 2 смена</div></div>
<div class="a " style="left:310.9px;top:390.8px;width:46.2px;height:13.5px;background:#d3d3d3;border:0.6px solid #b4b4b4;border-top-color:#c2c2c2;box-sizing:border-box"></div>
<div class="a t" style="left:314.0px;top:391.4px;height:12px;line-height:12px;font-size:8.232px;color:#333;font-weight:normal;transform:scaleX(0.8929);transform-origin:0 0;">19:30</div>
<div class="a " style="left:360.9px;top:390.9px;width:53.7px;height:13.1px;background:#d4d4d4"></div>
<div class="a " style="left:418.63px;top:390.9px;width:53.7px;height:13.1px;background:#d4d4d4"></div>
<div class="a " style="left:476.36px;top:390.9px;width:53.7px;height:13.1px;background:#d4d4d4"></div>
<div class="a " style="left:534.09px;top:390.9px;width:53.7px;height:13.1px;background:#d4d4d4"></div>
<div class="a " style="left:591.82px;top:390.9px;width:53.7px;height:13.1px;background:#d4d4d4"></div>
<div class="a " style="left:649.55px;top:390.9px;width:53.7px;height:13.1px;background:#d4d4d4"></div>
<div class="a " style="left:707.28px;top:390.9px;width:53.7px;height:13.1px;background:#d4d4d4"></div>
</body></html>
